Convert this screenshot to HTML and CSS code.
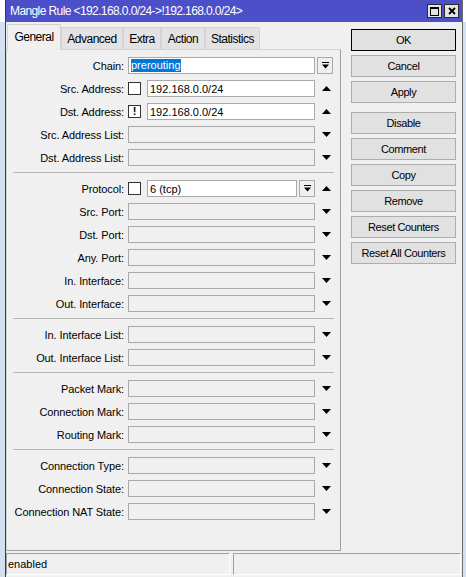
FILE: index.html
```html
<!DOCTYPE html>
<html>
<head>
<meta charset="utf-8">
<title>Mangle Rule</title>
<link rel="stylesheet" href="styles.css">
</head>
<body>
<div class="window">
  <div class="titlebar">
    <span class="title">Mangle Rule &lt;192.168.0.0/24-&gt;!192.168.0.0/24&gt;</span>
    <div class="tb-btns">
      <span class="tb-btn"><svg width="9" height="9" viewBox="0 0 9 9"><rect x="0.5" y="0.5" width="8" height="8" fill="none" stroke="#000"/><rect x="0" y="0" width="9" height="2" fill="#000"/></svg></span>
      <span class="tb-btn"><svg width="8" height="8" viewBox="0 0 8 8"><path d="M1 1L7 7M7 1L1 7" stroke="#000" stroke-width="1.8"/></svg></span>
    </div>
  </div>
  <div class="main">
    <div class="left">
      <div class="tabs">
        <span class="tab active w-general">General</span>
        <span class="tab w-advanced">Advanced</span>
        <span class="tab w-extra">Extra</span>
        <span class="tab w-action">Action</span>
        <span class="tab w-stats">Statistics</span>
      </div>
      <div class="panel">
        <div class="group">
          <div class="row"><span class="lbl">Chain:</span><div class="ctl"><div class="field white"><span class="sel">prerouting</span></div></div><div class="aux"><span class="ddbtn"><svg width="7" height="7" viewBox="0 0 7 7"><rect x="0" y="0" width="7" height="1" fill="#000"/><path d="M0 2.5H7L3.5 6.5Z" fill="#000"/></svg></span></div></div>
          <div class="row"><span class="lbl">Src. Address:</span><div class="ctl"><span class="chk"></span><div class="field white">192.168.0.0/24</div></div><div class="aux"><svg class="arrow" width="9" height="5" viewBox="0 0 9 5"><path d="M0 5L4.5 0L9 5Z" fill="#000"/></svg></div></div>
          <div class="row"><span class="lbl">Dst. Address:</span><div class="ctl"><span class="chk">!</span><div class="field white">192.168.0.0/24</div></div><div class="aux"><svg class="arrow" width="9" height="5" viewBox="0 0 9 5"><path d="M0 5L4.5 0L9 5Z" fill="#000"/></svg></div></div>
          <div class="row"><span class="lbl">Src. Address List:</span><div class="ctl"><div class="field"></div></div><div class="aux"><svg class="arrow" width="9" height="5" viewBox="0 0 9 5"><path d="M0 0H9L4.5 5Z" fill="#000"/></svg></div></div>
          <div class="row"><span class="lbl">Dst. Address List:</span><div class="ctl"><div class="field"></div></div><div class="aux"><svg class="arrow" width="9" height="5" viewBox="0 0 9 5"><path d="M0 0H9L4.5 5Z" fill="#000"/></svg></div></div>
        </div>
        <div class="sep"></div>
        <div class="group">
          <div class="row"><span class="lbl">Protocol:</span><div class="ctl"><span class="chk"></span><div class="field white">6 (tcp)</div><span class="ddbtn"><svg width="7" height="7" viewBox="0 0 7 7"><rect x="0" y="0" width="7" height="1" fill="#000"/><path d="M0 2.5H7L3.5 6.5Z" fill="#000"/></svg></span></div><div class="aux"><svg class="arrow" width="9" height="5" viewBox="0 0 9 5"><path d="M0 5L4.5 0L9 5Z" fill="#000"/></svg></div></div>
          <div class="row"><span class="lbl">Src. Port:</span><div class="ctl"><div class="field"></div></div><div class="aux"><svg class="arrow" width="9" height="5" viewBox="0 0 9 5"><path d="M0 0H9L4.5 5Z" fill="#000"/></svg></div></div>
          <div class="row"><span class="lbl">Dst. Port:</span><div class="ctl"><div class="field"></div></div><div class="aux"><svg class="arrow" width="9" height="5" viewBox="0 0 9 5"><path d="M0 0H9L4.5 5Z" fill="#000"/></svg></div></div>
          <div class="row"><span class="lbl">Any. Port:</span><div class="ctl"><div class="field"></div></div><div class="aux"><svg class="arrow" width="9" height="5" viewBox="0 0 9 5"><path d="M0 0H9L4.5 5Z" fill="#000"/></svg></div></div>
          <div class="row"><span class="lbl">In. Interface:</span><div class="ctl"><div class="field"></div></div><div class="aux"><svg class="arrow" width="9" height="5" viewBox="0 0 9 5"><path d="M0 0H9L4.5 5Z" fill="#000"/></svg></div></div>
          <div class="row"><span class="lbl">Out. Interface:</span><div class="ctl"><div class="field"></div></div><div class="aux"><svg class="arrow" width="9" height="5" viewBox="0 0 9 5"><path d="M0 0H9L4.5 5Z" fill="#000"/></svg></div></div>
        </div>
        <div class="sep"></div>
        <div class="group">
          <div class="row"><span class="lbl">In. Interface List:</span><div class="ctl"><div class="field"></div></div><div class="aux"><svg class="arrow" width="9" height="5" viewBox="0 0 9 5"><path d="M0 0H9L4.5 5Z" fill="#000"/></svg></div></div>
          <div class="row"><span class="lbl">Out. Interface List:</span><div class="ctl"><div class="field"></div></div><div class="aux"><svg class="arrow" width="9" height="5" viewBox="0 0 9 5"><path d="M0 0H9L4.5 5Z" fill="#000"/></svg></div></div>
        </div>
        <div class="sep"></div>
        <div class="group">
          <div class="row"><span class="lbl">Packet Mark:</span><div class="ctl"><div class="field"></div></div><div class="aux"><svg class="arrow" width="9" height="5" viewBox="0 0 9 5"><path d="M0 0H9L4.5 5Z" fill="#000"/></svg></div></div>
          <div class="row"><span class="lbl">Connection Mark:</span><div class="ctl"><div class="field"></div></div><div class="aux"><svg class="arrow" width="9" height="5" viewBox="0 0 9 5"><path d="M0 0H9L4.5 5Z" fill="#000"/></svg></div></div>
          <div class="row"><span class="lbl">Routing Mark:</span><div class="ctl"><div class="field"></div></div><div class="aux"><svg class="arrow" width="9" height="5" viewBox="0 0 9 5"><path d="M0 0H9L4.5 5Z" fill="#000"/></svg></div></div>
        </div>
        <div class="sep"></div>
        <div class="group">
          <div class="row"><span class="lbl">Connection Type:</span><div class="ctl"><div class="field"></div></div><div class="aux"><svg class="arrow" width="9" height="5" viewBox="0 0 9 5"><path d="M0 0H9L4.5 5Z" fill="#000"/></svg></div></div>
          <div class="row"><span class="lbl">Connection State:</span><div class="ctl"><div class="field"></div></div><div class="aux"><svg class="arrow" width="9" height="5" viewBox="0 0 9 5"><path d="M0 0H9L4.5 5Z" fill="#000"/></svg></div></div>
          <div class="row"><span class="lbl">Connection NAT State:</span><div class="ctl"><div class="field"></div></div><div class="aux"><svg class="arrow" width="9" height="5" viewBox="0 0 9 5"><path d="M0 0H9L4.5 5Z" fill="#000"/></svg></div></div>
        </div>
      </div>
    </div>
    <div class="actions">
      <div class="btn-group">
        <span class="btn default">OK</span>
        <span class="btn">Cancel</span>
        <span class="btn">Apply</span>
      </div>
      <div class="btn-group">
        <span class="btn">Disable</span>
        <span class="btn">Comment</span>
        <span class="btn">Copy</span>
        <span class="btn">Remove</span>
        <span class="btn">Reset Counters</span>
        <span class="btn">Reset All Counters</span>
      </div>
    </div>
  </div>
  <div class="statusbar">
    <div class="sfield first">enabled</div>
    <div class="sfield"></div>
  </div>
</div>
</body>
</html>
```

FILE: styles.css
```css
* { box-sizing: border-box; }
html, body { margin: 0; padding: 0; }
body {
  width: 466px;
  height: 577px;
  overflow: hidden;
  background: linear-gradient(#ffffff 0 22px, #d3e0f2 22px);
  font-family: "Liberation Sans", Arial, sans-serif;
  font-size: 11px;
  color: #000;
}
.window {
  margin-left: 5px;
  width: 458px;
  height: 577px;
  background: #f0f0f0;
  border-left: 1px solid #3c3c3c;
  border-right: 1px solid #6d6d6d;
  display: flex;
  flex-direction: column;
}
.titlebar {
  height: 22px;
  flex: none;
  background: #4b4fc8;
  display: flex;
  align-items: center;
  justify-content: space-between;
  padding: 0 3px 0 4px;
  color: #fff;
}
.title { font-size: 12px; letter-spacing: -0.6px; }
.tb-btns { display: flex; gap: 2px; }
.tb-btn {
  width: 15px;
  height: 14px;
  background: #e4e4e4;
  border: 1px solid #2b2b2b;
  display: flex;
  align-items: center;
  justify-content: center;
}
.main { display: flex; flex: 1; min-height: 0; }
.left { width: 335px; flex: none; display: flex; flex-direction: column; }
.tabs {
  height: 27px;
  flex: none;
  display: flex;
  align-items: flex-end;
  padding-left: 1px;
  position: relative;
  z-index: 1;
}
.tab {
  height: 22px;
  background: #e3e3e3;
  border: 1px solid #d4d4d4;
  border-bottom: none;
  font-size: 12px;
  letter-spacing: -0.5px;
  display: flex;
  align-items: center;
  justify-content: center;
  flex: none;
}
.tab.active {
  height: 26px;
  margin-bottom: -1px;
  background: #f0f0f0;
  padding-bottom: 2px;
}
.w-general { width: 54px; }
.w-advanced { width: 62px; }
.w-extra { width: 38px; }
.w-action { width: 44px; }
.w-stats { width: 55px; }
.panel {
  flex: 1;
  border-top: 1px solid #d4d4d4;
  border-left: 1px solid #d4d4d4;
  border-right: 1px solid #a0a0a0;
  border-bottom: 1px solid #a0a0a0;
  padding-top: 7px;
}
.group { display: flex; flex-direction: column; gap: 6px; }
.row {
  display: flex;
  align-items: center;
  height: 17px;
}
.lbl {
  width: 117px;
  margin-right: 4px;
  text-align: right;
  letter-spacing: -0.1px;
  white-space: nowrap;
}
.ctl {
  width: 187px;
  height: 17px;
  display: flex;
  align-items: center;
  gap: 6px;
}
.aux {
  width: 18px;
  height: 17px;
  display: flex;
  align-items: center;
  justify-content: flex-end;
}
.arrow { margin-right: 2px; display: block; }
.field {
  flex: 1;
  height: 17px;
  border: 1px solid #a9a9a9;
  background: #f0f0f0;
  padding-left: 2px;
  display: flex;
  align-items: center;
  white-space: nowrap;
}
.field.white { background: #fff; }
.sel {
  background: #0078d7;
  color: #fff;
  line-height: 13px;
}
.chk {
  width: 13px;
  height: 13px;
  flex: none;
  background: #fff;
  border: 1px solid #333;
  display: flex;
  align-items: center;
  justify-content: center;
  font-weight: bold;
  font-size: 11px;
  line-height: 1;
}
.ddbtn {
  width: 16px;
  height: 17px;
  flex: none;
  border: 1px solid #a9a9a9;
  background: #f0f0f0;
  display: flex;
  align-items: center;
  justify-content: center;
}
.ctl .ddbtn { margin-left: -4px; }
.sep {
  height: 1px;
  background: #b5b5b5;
  margin: 6px 6px 7px 6px;
}
.actions {
  width: 105px;
  margin-left: 10px;
  padding-top: 7px;
  display: flex;
  flex-direction: column;
  gap: 9px;
}
.btn-group { display: flex; flex-direction: column; gap: 4px; }
.btn {
  height: 22px;
  background: #e1e1e1;
  border: 1px solid #adadad;
  display: flex;
  align-items: center;
  justify-content: center;
  letter-spacing: -0.4px;
  white-space: nowrap;
}
.btn.default { border-color: #000; }
.statusbar {
  height: 26px;
  flex: none;
  display: flex;
  gap: 3px;
  padding: 2px 1px 2px 0;
}
.sfield {
  flex: 1;
  border-top: 1px solid #a0a0a0;
  border-left: 1px solid #a0a0a0;
  border-bottom: 1px solid #fff;
  border-right: 1px solid #fff;
  display: flex;
  align-items: center;
  padding-left: 1px;
}
.sfield.first { flex: none; width: 224px; }
```
